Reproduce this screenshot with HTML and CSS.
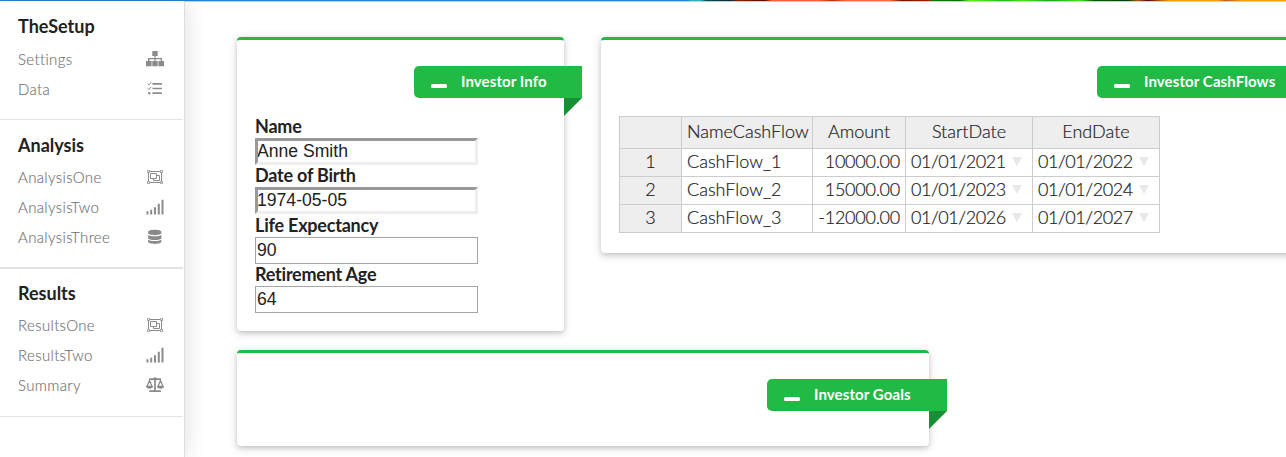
FILE: index.html
```
<!DOCTYPE html>
<html lang="en">
<head>
<meta charset="utf-8">
<title>Investor Setup</title>
<link rel="stylesheet" href="styles.css">
</head>
<body>
<svg class="defs" aria-hidden="true">
  <symbol id="sitemap" viewBox="0 0 18 16"><path d="M6.3 0h5.4v5H9.6v2H16v3h2v5.2h-5.6V10h2.3V8.2H9.6V10h2.1v5.2H6.3V10h2.1V8.2h-5V10h2.2v5.2H0V10h2V7h6.4V5H6.3z" /></symbol>
  <symbol id="tasks" viewBox="0 0 18 16"><path d="M6.5 2.8h9.4M6.5 7.5h9.4M6.5 12.2h9.4" class="line thick"/><path d="M1.7 2.7l1.2 1.2 2.3-2.6M1.7 7.3l1.2 1.2 2.3-2.6" class="line"/><circle cx="3.2" cy="12.2" r="1.2"/></symbol>
  <symbol id="group" viewBox="0 0 18 16"><path d="M2.5 2.5h13v11h-13z" class="line"/><path d="M4.5 4.5h6v5h-6zM10.5 6.5h3v5h-6v-2" class="line"/><path d="M1.5 1.5h2v2h-2zM14.5 1.5h2v2h-2zM1.5 12.5h2v2h-2zM14.5 12.5h2v2h-2z" class="line corner"/></symbol>
  <symbol id="signal" viewBox="0 0 18 16"><path d="M.4 12.3h2v3.2h-2zM4.2 10.7h2v4.8h-2zM8 8.2h2v7.3H8zM11.8 4.7h2v10.8h-2zM15.5.7h2v14.8h-2z"/></symbol>
  <symbol id="database" viewBox="0 0 18 16"><path d="M2.1 2.8C2.1-.1 15.4-.1 15.4 2.8v1.3c0 2.7-13.3 2.7-13.3 0zM2.1 5.9c2.2 1.7 11.1 1.7 13.3 0v3c0 2.7-13.3 2.7-13.3 0zM2.1 10.7c2.2 1.7 11.1 1.7 13.3 0v2.1c0 2.8-13.3 2.8-13.3 0z"/></symbol>
  <symbol id="balance" viewBox="0 0 18 16"><path d="M3 2.1h12M9 1.5v12.7M3.2 14.2h11.7" class="line thick"/><circle cx="9" cy="2" r="1.8"/><path d="M3.5 3.6L.9 9.5h5.2zM14.5 3.6L11.9 9.5h5.2z" class="line pan"/><path d="M0 9.1h7c-.2 3.6-6.8 3.6-7 0zM11 9.1h7c-.2 3.6-6.8 3.6-7 0z"/></symbol>
</svg>
<div class="topbar"></div>
<div class="shell">
  <nav class="sidebar">
    <section class="group">
      <h2>TheSetup</h2>
      <a><span>Settings</span><svg><use href="#sitemap"/></svg></a>
      <a><span>Data</span><svg><use href="#tasks"/></svg></a>
    </section>
    <section class="group heavy">
      <h2>Analysis</h2>
      <a><span>AnalysisOne</span><svg><use href="#group"/></svg></a>
      <a><span>AnalysisTwo</span><svg><use href="#signal"/></svg></a>
      <a><span>AnalysisThree</span><svg><use href="#database"/></svg></a>
    </section>
    <section class="group last">
      <h2>Results</h2>
      <a><span>ResultsOne</span><svg><use href="#group"/></svg></a>
      <a><span>ResultsTwo</span><svg><use href="#signal"/></svg></a>
      <a><span>Summary</span><svg><use href="#balance"/></svg></a>
    </section>
  </nav>
  <main class="content">
    <div class="row">
      <section class="card info">
        <div class="ribbon"><i class="minus"></i><span>Investor Info</span></div>
        <form class="fields">
          <label>Name</label><input class="inset" type="text" value="Anne Smith">
          <label>Date of Birth</label><input class="inset" type="text" value="1974-05-05">
          <label>Life Expectancy</label><input type="text" value="90">
          <label>Retirement Age</label><input type="text" value="64">
        </form>
      </section>
      <section class="card flows">
        <div class="ribbon"><i class="minus"></i><span>Investor CashFlows</span></div>
        <table>
          <colgroup><col class="c-index"><col class="c-name"><col class="c-amount"><col class="c-date"><col class="c-date"></colgroup>
          <thead><tr><th></th><th>NameCashFlow</th><th>Amount</th><th>StartDate</th><th>EndDate</th></tr></thead>
          <tbody>
            <tr><th>1</th><td>CashFlow_1</td><td class="num">10000.00</td><td><div class="date">01/01/2021<i></i></div></td><td><div class="date">01/01/2022<i></i></div></td></tr>
            <tr><th>2</th><td>CashFlow_2</td><td class="num">15000.00</td><td><div class="date">01/01/2023<i></i></div></td><td><div class="date">01/01/2024<i></i></div></td></tr>
            <tr><th>3</th><td>CashFlow_3</td><td class="num">-12000.00</td><td><div class="date">01/01/2026<i></i></div></td><td><div class="date">01/01/2027<i></i></div></td></tr>
          </tbody>
        </table>
      </section>
    </div>
    <section class="card goals">
      <div class="ribbon"><i class="minus"></i><span>Investor Goals</span></div>
    </section>
  </main>
</div>
</body>
</html>
```
FILE: styles.css
```
* { box-sizing: border-box; }
body { margin: 0; height: 457px; overflow: hidden; background: #fff; color: #222; font-family: Lato, "Liberation Sans", sans-serif; }
.defs { display: none; }
.topbar { height: 1px; background: linear-gradient(90deg, #2185d0 0 689px, #2bb5ac 690px 701px, #064b4e 706px, #14292b 730px, #841d10 738px, #5a0800 765px, #ff5b38 772px 820px, #b52b12 832px, #ff6544 846px 890px, #701006 902px, #a51c0b 928px, #087b12 935px, #0c6c12 960px, #65ee18 970px, #18b917 1005px, #50e419 1022px, #18a518 1050px, #49e320 1080px, #075712 1094px, #073c12 1128px, #b95416 1138px, #401018 1148px, #b35b12 1160px, #ff9d0c 1170px 1218px, #bd5a17 1226px, #ff9d0c 1242px); box-shadow: 0 1px 0 rgba(33, 133, 208, .35); }
.shell { display: flex; height: 456px; }
.sidebar { width: 185px; flex: none; background: #fff; border-right: 1px solid #ddd; box-shadow: 0 0 20px rgba(34, 36, 38, .15); }
.group { width: 183px; height: 119px; padding: 13px 18px 0; border-bottom: 1px solid #e4e4e4; }
.group h2 { margin: 0 0 6px; font-size: 18px; line-height: 24px; font-weight: 700; letter-spacing: 0; }
.group a { display: flex; align-items: center; justify-content: space-between; height: 30px; color: #747474; font-size: 15px; font-weight: 300; letter-spacing: .35px; font-variant-ligatures: none; -webkit-text-stroke: .15px; }
.group a span { margin-top: -1px; }
.group svg { width: 18px; height: 16px; margin-right: 1px; fill: #8b8b8b; flex: none; -webkit-text-stroke: 0; }
.group + .group { height: 148px; }
.group + .group h2 { margin-bottom: 5px; }
.group.group.heavy { height: 149px; border-bottom-width: 2px; }
.group.group.last { padding-top: 12px; }
.line { fill: none; stroke: #8b8b8b; stroke-width: 1; }
.thick { stroke-width: 1.7; }
.pan { stroke-width: 1.3; }
.corner { fill: #fff; stroke-width: .8; }
.content { flex: 1; min-width: 0; padding: 36px 0 0 52px; }
.row { display: flex; align-items: flex-start; gap: 37px; margin-bottom: 19px; }
.card { flex: none; border-top: 3px solid #21ba45; border-radius: 4px; padding: 26px 18px 0; background: #fff; box-shadow: 0 2px 4px rgba(34, 36, 38, .14), 0 2px 10px rgba(34, 36, 38, .18); }
.info { width: 327px; height: 294px; }
.flows { width: 710px; height: 216px; }
.goals { width: 692px; height: 96px; }
.ribbon { position: relative; display: flex; align-items: center; width: 168px; height: 32px; margin-left: auto; margin-right: -36px; padding-left: 17px; border-radius: 5px 0 0 5px; background: #21ba45; color: #fff; font-size: 15px; font-weight: 700; letter-spacing: .1px; white-space: nowrap; }
.ribbon span { margin-top: -2px; }
.ribbon::after { content: ""; position: absolute; top: 100%; right: 0; border: 9px solid; border-color: #198f35 transparent transparent #198f35; }
.minus { width: 16px; height: 4px; margin: 8px 14px 0 0; border-radius: 1.5px; background: #fff; }
.flows .ribbon { width: 232px; }
.goals .ribbon { width: 180px; }
.fields { display: flex; flex-direction: column; width: 223px; margin-top: 18px; }
.fields label { height: 22px; font-size: 18px; line-height: 20px; font-weight: 700; letter-spacing: -.22px; }
.fields input { height: 27px; margin-bottom: .4px; padding: 0 1px; border: 1px solid #a6a6a6; background: #fff; color: #222; font: 17.6px "Liberation Sans", sans-serif; }
.fields .inset { padding: 0; border: 3px solid; border-color: #999 #eee #eee #999; text-indent: -1px; }
table { width: 541px; margin-top: 18px; border-collapse: collapse; table-layout: fixed; font-size: 18px; font-weight: 300; -webkit-text-stroke: .2px; }
.c-index { width: 62px; }
.c-name { width: 131px; }
.c-amount { width: 93px; }
.c-date { width: 127px; }
th, td { height: 28px; padding: 0 5px 2px; border: 1px solid #ccc; font-weight: inherit; line-height: 23px; white-space: nowrap; }
th { background: #eee; }
thead th { height: 32px; }
.num { text-align: right; letter-spacing: -.25px; }
.date { display: flex; align-items: center; justify-content: space-between; padding-right: 5px; letter-spacing: -.45px; }
.date i { border: 5px solid transparent; border-top: 9px solid #e8e8e8; border-bottom: 0; }
```
